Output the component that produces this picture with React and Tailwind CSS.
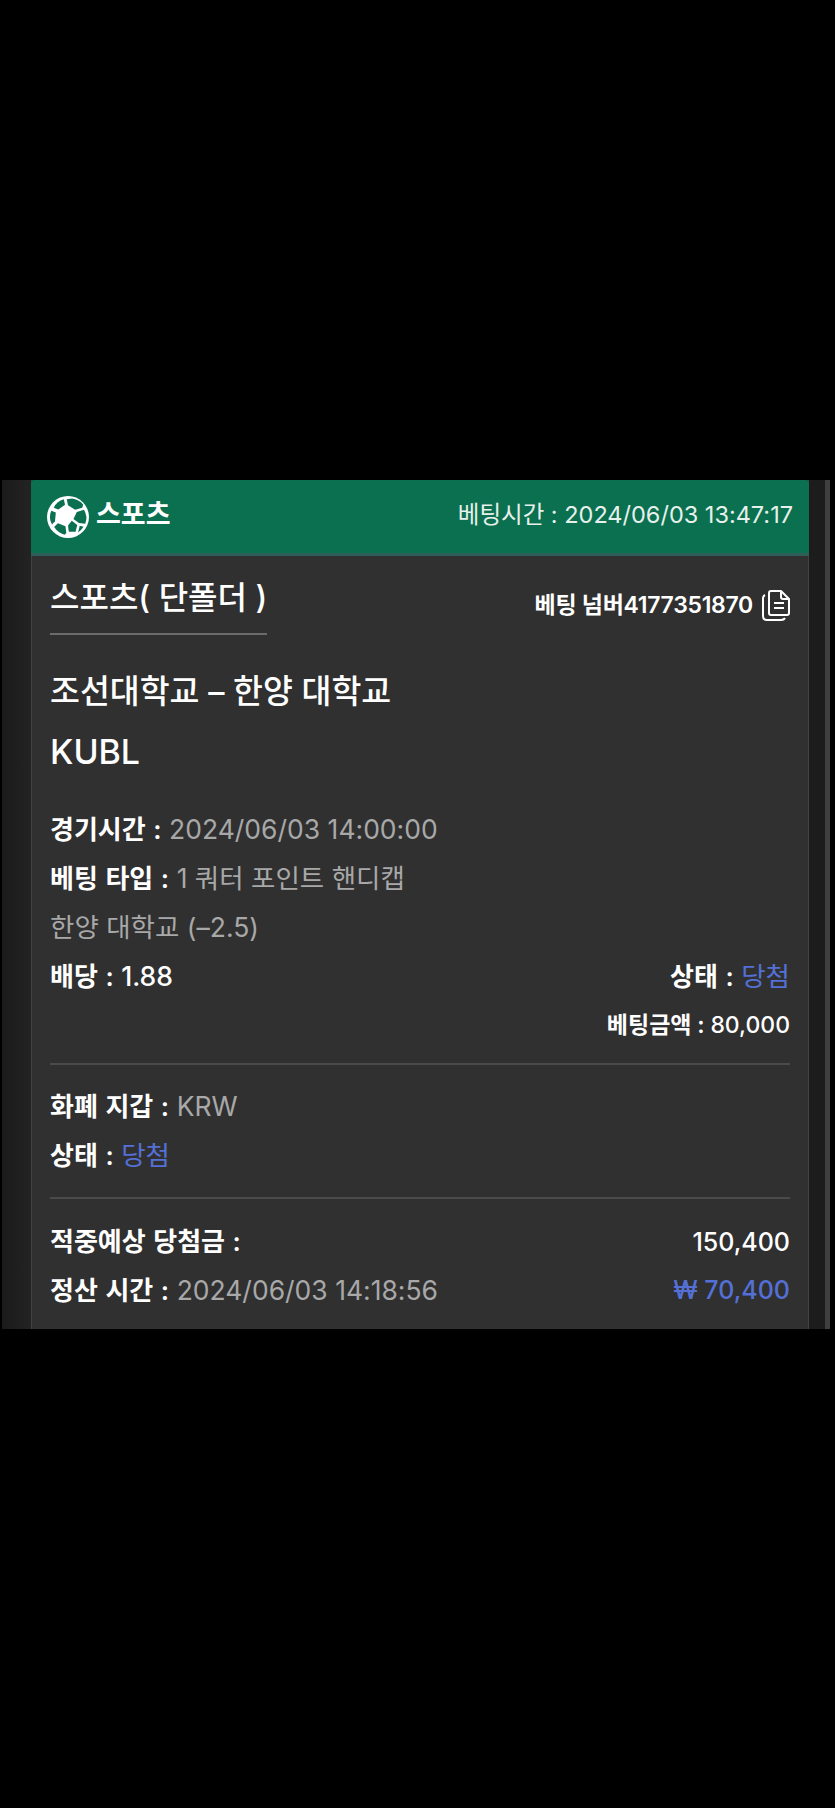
const font = "font-['Inter','Noto_Sans_CJK_KR',sans-serif]"

function SoccerBall() {
    return (
        <svg width="42" height="42" viewBox="0 0 100 100" className="shrink-0">
            <circle cx="50" cy="50" r="50" fill="#fff" />
            <g fill="#0a7050">
                <path d="M47 8 L60 6 Q75 8 86 20 L84 28 L67 33 L50 22 Z" />
                <path d="M40 8 L43 21 L27 32 L16 28 Q24 12 40 8 Z" />
                <path d="M10 35 L21 39 L19 60 L12 68 Q3 52 10 35 Z" />
                <path d="M71 38 L88 33 Q98 50 91 66 L76 64 L63 55 Z" />
                <path d="M26 65 L44 72 L46 88 L42 92 Q26 88 17 74 Z" />
                <path d="M59 59 L72 69 L68 85 L52 85 L50 70 Z" />
                <path d="M78 71 L87 73 Q81 82 74 87 Z" />
            </g>
        </svg>
    )
}

function CopyIcon() {
    return (
        <svg width="28" height="32" viewBox="0 0 28 32" fill="none" stroke="#fff" strokeWidth="2" strokeLinejoin="round" className="shrink-0">
            <path d="M9 2 H19 L27 10 V24 Q27 26 25 26 H9 Q7 26 7 24 V4 Q7 2 9 2 Z" />
            <path d="M19 2 V8 Q19 10 21 10 H27" />
            <path d="M3 6 Q1 7 1 9 V27 Q1 31 5 31 H19 Q22 31 23 29" />
            <path d="M12 14 H22 M12 19 H22" />
        </svg>
    )
}

function Label({ children, className = '' }) {
    return <span className={`text-[26px] font-semibold text-white [word-spacing:1px] ${className}`}>{children}</span>
}

function Divider() {
    return <div className="h-[2px] bg-[#4a4a4a]" />
}

export default function App() {
    return (
        <div className={`min-h-[1808px] bg-black ${font}`}>
            <div className="h-[480px]" />
            <div className="flex h-[849px] overflow-hidden">
                <div className="ml-[2px] w-[29px] bg-gradient-to-r from-[#1a1a1a] to-[#232323]" />
                <div className="flex w-[778px] flex-col border-x border-[#424242] bg-[#303030]">
                    {/* Header */}
                    <div className="-mx-px flex h-[76px] items-center justify-between rounded-t-[3px] border-b-[3px] border-[#2f5d57] bg-[#0a7050] pl-[16px] pr-[16px]">
                        <div className="flex items-center gap-[7px]">
                            <SoccerBall />
                            <span className="mb-[4px] text-[27px] font-semibold leading-none text-white">스포츠</span>
                        </div>
                        <span className="mb-[4px] text-[23.5px] leading-none text-[#e8f0ec]">베팅시간 : 2024/06/03 13:47:17</span>
                    </div>

                    {/* Body */}
                    <div className="flex flex-col px-[18px]">
                        <div className="flex items-start justify-between pt-[21px]">
                            <div className="w-[217px] border-b-2 border-[#6b6b6b] pb-[15px]">
                                <div className="whitespace-nowrap text-[32px] font-medium leading-[41px] text-white">스포츠( 단폴더 )</div>
                            </div>
                            <div className="mt-[11px] flex items-center gap-[9px]">
                                <span className="text-[23px] font-semibold leading-[34px] text-white tracking-[-0.3px]">베팅 넘버4177351870</span>
                                <CopyIcon />
                            </div>
                        </div>

                        <div className="mt-[35px] text-[32.5px] font-medium leading-[44px] text-white">조선대학교 – 한양 대학교</div>
                        <div className="mt-[16px] text-[34px] font-medium leading-[44px] text-white">KUBL</div>

                        <div className="mt-[31px] flex flex-col text-[26.5px] leading-[49px] text-[#a8a8a8]">
                            <div><Label>경기시간 : </Label>2024/06/03 14:00:00</div>
                            <div><Label>베팅 타입 : </Label>1 쿼터 포인트 핸디캡</div>
                            <div>한양 대학교 (–2.5)</div>
                            <div className="flex justify-between">
                                <span><Label>배당 : </Label><span className="font-medium text-white">1.88</span></span>
                                <span><Label>상태 : </Label><span className="text-[#5470d6]">당첨</span></span>
                            </div>
                            <div className="text-right text-[23px] font-semibold text-white">베팅금액 : <span className="font-medium">80,000</span></div>
                        </div>

                        <div className="mt-[13px]"><Divider /></div>

                        <div className="mt-[17px] flex flex-col text-[26.5px] leading-[49px] text-[#a8a8a8]">
                            <div><Label>화폐 지갑 : </Label>KRW</div>
                            <div><Label>상태 : </Label><span className="text-[#5470d6]">당첨</span></div>
                        </div>

                        <div className="mt-[17px]"><Divider /></div>

                        <div className="mt-[19px] flex flex-col text-[26.5px] leading-[48px] text-[#a8a8a8]">
                            <div className="flex justify-between">
                                <Label>적중예상 당첨금 :</Label>
                                <span className="text-[25px] font-medium text-white">150,400</span>
                            </div>
                            <div className="flex justify-between">
                                <span><Label>정산 시간 : </Label>2024/06/03 14:18:56</span>
                                <span className="text-[25px] font-medium text-[#5470d6]">₩ 70,400</span>
                            </div>
                        </div>
                    </div>
                </div>
                <div className="w-[16px] bg-[#1c1c1c]" />
                <div className="w-[5px] bg-[#3f3f3f]" />
            </div>
        </div>
    )
}
